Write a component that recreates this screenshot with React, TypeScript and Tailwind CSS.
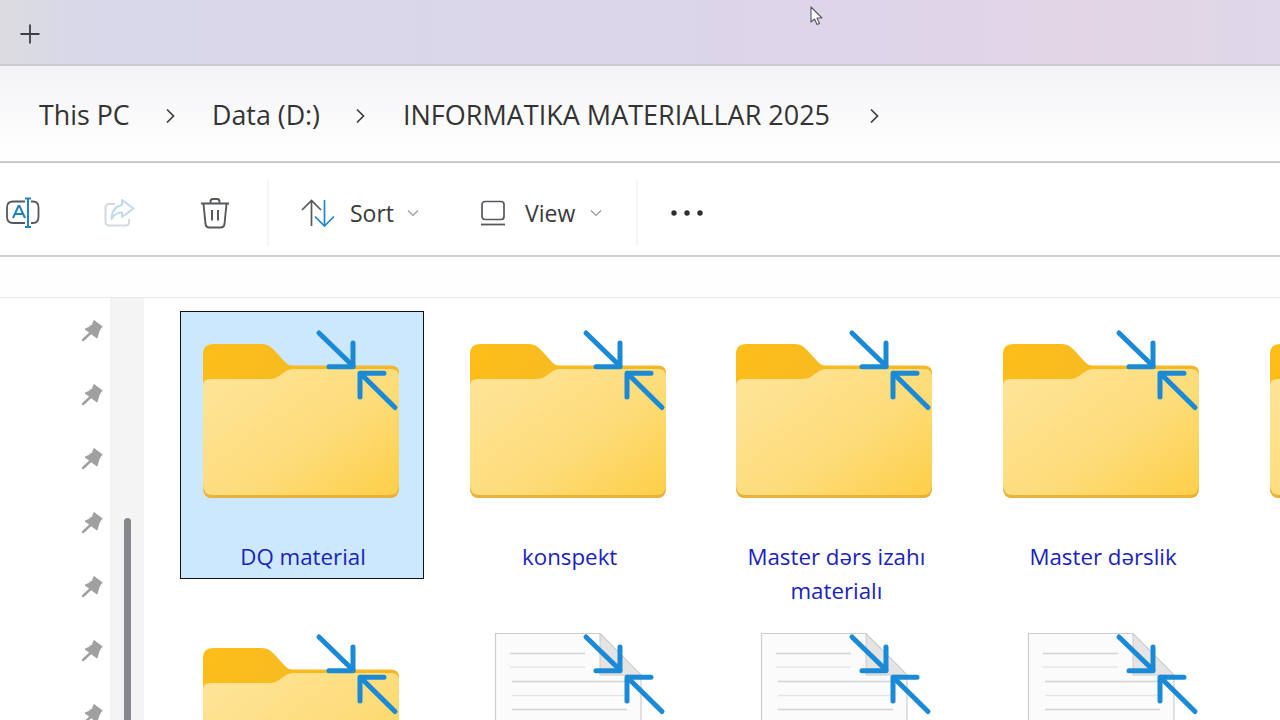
import React from 'react';

const font = { fontFamily: '"Open Sans", "Noto Sans", sans-serif' };

function Arrows() {
  return (
    <g fill="none" stroke="#1a8ad6" strokeWidth="5" strokeLinecap="round" strokeLinejoin="round">
      <path d="M116 3L150 36" />
      <path d="M150 13V36.7H126" />
      <path d="M192 77.5L157.5 43.5" />
      <path d="M157 67V43.3H181" />
    </g>
  );
}

function FolderIcon({ id }: { id: string }) {
  return (
    <svg width="198" height="170" viewBox="0 0 198 170" className="overflow-visible shrink-0">
      <defs>
        <linearGradient id={`front-${id}`} x1="0" y1="0.1" x2="1" y2="1">
          <stop offset="0" stopColor="#fee498" />
          <stop offset="0.55" stopColor="#fddc7a" />
          <stop offset="1" stopColor="#fdcf48" />
        </linearGradient>
        <linearGradient id={`tab-${id}`} x1="0" y1="0" x2="1" y2="0.6">
          <stop offset="0" stopColor="#fdbe18" />
          <stop offset="1" stopColor="#efb62e" />
        </linearGradient>
      </defs>
      <path
        d="M0 24Q0 14 10 14H59Q66 14 71 20L82 32Q85 35.5 90 35.5H188Q196 35.5 196 43V158Q196 168 186 168H10Q0 168 0 158Z"
        fill={`url(#tab-${id})`}
      />
      <path d="M0 156V158Q0 168 10 168H186Q196 168 196 158V156Z" fill="#e9b03a" />
      <path
        d="M0 55Q0 49 8 49H66Q72 49 76 46L83 41Q86 39 90 39H188Q196 39 196 47V155Q196 165 186 165H10Q0 165 0 155Z"
        fill={`url(#front-${id})`}
      />
      <Arrows />
    </svg>
  );
}

function DocIcon() {
  return (
    <svg width="198" height="170" viewBox="0 0 198 170" className="overflow-visible shrink-0">
      <path d="M25.5 -0.5H130L171 41V170H25.5Z" fill="#fbfbfb" stroke="#cdcdcd" strokeWidth="1.2" />
      <path d="M130 -0.5V41H171Z" fill="#e4e4e4" stroke="#cacaca" strokeWidth="1" />
      <g stroke="#d2d2d2" strokeWidth="1.4">
        <path d="M40 19.5H115" />
        <path d="M40 33H115" stroke="#e6e6e6" />
        <path d="M42 47.5H157" />
        <path d="M42 61.5H157" stroke="#e6e6e6" />
        <path d="M42 75.5H157" />
      </g>
      <Arrows />
    </svg>
  );
}

function Tile({ label, selected, doc, id }: { label?: React.ReactNode; selected?: boolean; doc?: boolean; id: string }) {
  return (
    <div
      className={`flex flex-col items-center w-[244px] h-[268px] pt-[18px] border ${
        selected ? 'bg-[#cce8ff] border-[#111111]' : 'border-transparent'
      }`}
    >
      {doc ? <DocIcon /> : <FolderIcon id={id} />}
      <div className="mt-[40px] pl-[2px] text-center text-[22.3px] leading-[34px] text-[#1a22c0] w-full">{label}</div>
    </div>
  );
}

function Pin() {
  return (
    <svg width="22" height="24" viewBox="0 0 22 24" className="shrink-0">
      <path d="M13 1.5L21 7.5L18 12L16 19L4 10L7.5 8.5L11.5 5.5Z" fill="#9fa0a2" stroke="#9fa0a2" strokeWidth="1" strokeLinejoin="round" />
      <path d="M9 14.5L2 21" stroke="#9fa0a2" strokeWidth="2.4" strokeLinecap="round" />
    </svg>
  );
}

function Chevron() {
  return (
    <svg width="10" height="16" viewBox="0 0 10 16" className="shrink-0">
      <path d="M2 1.5L8.5 8L2 14.5" fill="none" stroke="#3c3c3c" strokeWidth="1.7" />
    </svg>
  );
}

function SmallChevron() {
  return (
    <svg width="12" height="8" viewBox="0 0 12 8" className="shrink-0">
      <path d="M1 1.5L6 6.5L11 1.5" fill="none" stroke="#9a9a9a" strokeWidth="1.2" />
    </svg>
  );
}

function Divider() {
  return <div className="w-[2px] h-[66px] bg-[#f5f5f5] shrink-0" />;
}

export default function App() {
  return (
    <div className="relative w-[1280px] h-[720px] overflow-hidden bg-white flex flex-col" style={font}>
      {/* tab strip */}
      <div className="h-[66px] shrink-0 flex items-center pl-[20px] pt-[3px] border-b-2 border-[#cbc9d1] bg-[linear-gradient(to_right,#dcdce0_0%,#d8d8e9_6%,#dbd6ea_40%,#ddd5ea_65%,#e3d5e6_85%,#ded8e8_100%)]">
        <svg width="20" height="20" viewBox="0 0 20 20">
          <path d="M10 0.5V19.5M0.5 10H19.5" stroke="#3d3d48" strokeWidth="1.8" />
        </svg>
      </div>

      {/* address bar */}
      <div className="h-[97px] shrink-0 flex items-center pl-[39px] pt-[4px] border-b-2 border-[#c8c9cc] bg-gradient-to-b from-[#f4f4f7] to-[#ffffff] text-[26.8px] text-[#333333]">
        <span className="w-[126px] whitespace-nowrap">This PC</span>
        <Chevron />
        <span className="ml-[37px] w-[143px] whitespace-nowrap">Data (D:)</span>
        <Chevron />
        <span className="ml-[38px] w-[466px] whitespace-nowrap text-[27px]">INFORMATIKA MATERIALLAR 2025</span>
        <Chevron />
      </div>

      {/* command bar */}
      <div className="h-[94px] shrink-0 flex items-center pt-[8px] border-b-2 border-[#d0d1d3] text-[23px] text-[#3a3a3a]">
        <svg width="34" height="32" viewBox="0 0 34 32" className="ml-[6px] shrink-0">
          <path d="M19 4.5H7Q1 4.5 1 10.5V20Q1 26 7 26H19M25 4.5H27Q32.5 4.5 32.5 10.5V20Q32.5 26 27 26H25" fill="none" stroke="#55585c" strokeWidth="1.8" />
          <path d="M7 21L12.5 9H13.5L19 21M9 17H17" fill="none" stroke="#1f7fc4" strokeWidth="2" />
          <path d="M22 1.5V30M19 1.5H25M19 30H25" fill="none" stroke="#1f86cc" strokeWidth="2" />
        </svg>
        <svg width="32" height="30" viewBox="0 0 32 30" className="ml-[64px] shrink-0">
          <path d="M11 6H5Q1.5 6 1.5 9.5V24Q1.5 27.5 5 27.5H22Q25 27.5 25 24V21" fill="none" stroke="#d4d9dd" strokeWidth="2" />
          <path d="M18 2L29.5 10.5L18 19V14.5Q11 14.5 7.5 21Q8 9 18 7Z" fill="none" stroke="#c2d9ea" strokeWidth="2" strokeLinejoin="round" />
        </svg>
        <svg width="30" height="32" viewBox="0 0 30 32" className="ml-[64px] shrink-0">
          <path d="M1 6.5H29M10.5 6V4.5Q10.5 2 13 2H17Q19.5 2 19.5 4.5V6M3.5 7L5.5 27Q6 30.5 9.5 30.5H20.5Q24 30.5 24.5 27L26.5 7" fill="none" stroke="#55585c" strokeWidth="1.9" />
          <path d="M12 13V23.5M18 13V23.5" fill="none" stroke="#55585c" strokeWidth="2" />
        </svg>
        <div className="ml-[37px] shrink-0">
          <Divider />
        </div>
        <svg width="34" height="28" viewBox="0 0 34 28" className="ml-[32px] shrink-0">
          <path d="M1 11L10.5 1.5L20 11M10.5 2V27" fill="none" stroke="#55585c" strokeWidth="1.7" />
          <path d="M14 17.5L23.5 27L33 17.5M23.5 26V1" fill="none" stroke="#1f86cc" strokeWidth="1.7" />
        </svg>
        <span className="ml-[15px] w-[57px]">Sort</span>
        <SmallChevron />
        <svg width="26" height="26" viewBox="0 0 26 26" className="ml-[61px] shrink-0">
          <rect x="2" y="1.5" width="22" height="18" rx="3" fill="none" stroke="#55585c" strokeWidth="1.7" />
          <path d="M1 24.5H25" stroke="#55585c" strokeWidth="1.8" />
        </svg>
        <span className="ml-[19px] w-[65px]">View</span>
        <SmallChevron />
        <div className="ml-[34px] shrink-0">
          <Divider />
        </div>
        <svg width="34" height="8" viewBox="0 0 34 8" className="ml-[32px] shrink-0">
          <circle cx="4" cy="4" r="2.7" fill="#2f2f2f" />
          <circle cx="17" cy="4" r="2.7" fill="#2f2f2f" />
          <circle cx="30" cy="4" r="2.7" fill="#2f2f2f" />
        </svg>
      </div>

      {/* details strip */}
      <div className="h-[41px] shrink-0 border-b border-[#e6e6e6] bg-[#fefefe]" />

      <div className="flex flex-1 min-h-0">
        {/* nav pane */}
        <div className="w-[110px] shrink-0 flex flex-col items-end pr-[7px] pt-[21px] gap-[40px]">
          {[0, 1, 2, 3, 4, 5, 6].map((i) => (
            <Pin key={i} />
          ))}
        </div>
        <div className="w-[34px] shrink-0 bg-[#f4f4f5] pl-[14px] pt-[220px]">
          <div className="w-[7px] h-[300px] rounded-t-full bg-[#88888c]" />
        </div>

        {/* file grid */}
        <div className="pl-[36px] pt-[13px] grid grid-cols-[repeat(5,244px)] auto-rows-[268px] gap-x-[22.7px] gap-y-[36px]">
          <Tile id="a" selected label="DQ material" />
          <Tile id="b" label="konspekt" />
          <Tile
            id="c"
            label={
              <>
                Master dərs izahı
                <br />
                materialı
              </>
            }
          />
          <Tile id="d" label="Master dərslik" />
          <Tile id="e" />
          <Tile id="f" />
          <Tile id="g" doc />
          <Tile id="h" doc />
          <Tile id="i" doc />
        </div>
      </div>

      {/* mouse pointer */}
      <svg width="14" height="20" viewBox="0 0 14 20" className="absolute left-[810px] top-[6px]">
        <path d="M1 1V16L4.5 13L7 18.5L9.5 17.5L7 12H12Z" fill="#ffffff" stroke="#56565e" strokeWidth="1.1" strokeLinejoin="round" />
      </svg>
    </div>
  );
}
